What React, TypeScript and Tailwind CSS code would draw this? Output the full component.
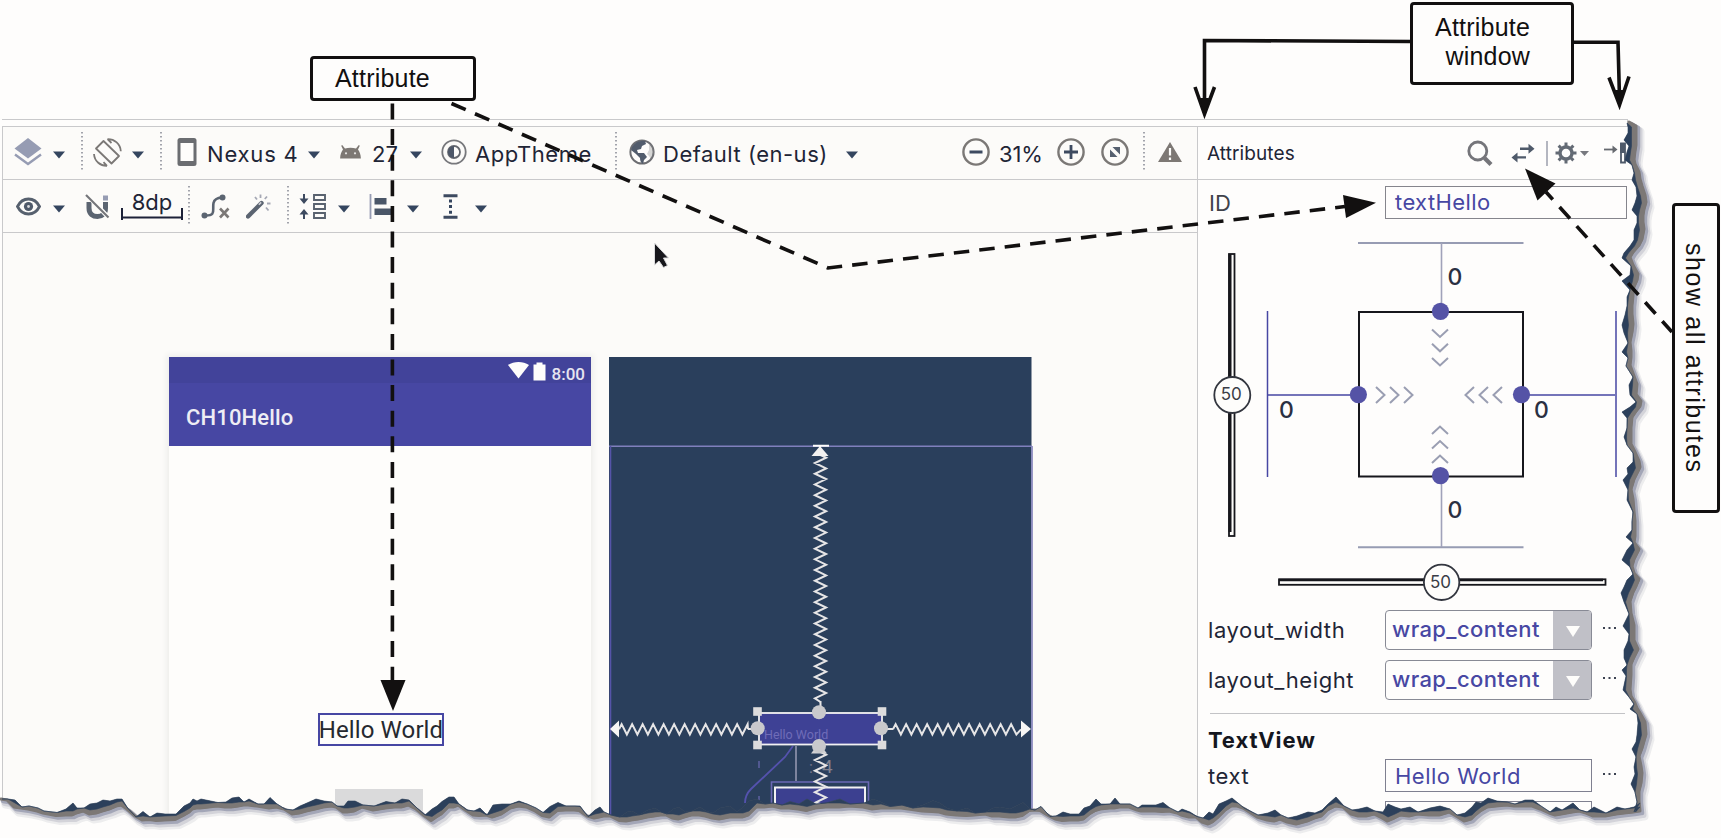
import React from "react";

type IconProps = { className?: string };

const SLATE = "#3d4a60";
const GRAY = "#7b7876";
const INDIGO = "#4747a3";

/* ---------- toolbar primitives ---------- */

function Caret({ className = "" }: IconProps) {
  return (
    <svg className={`mt-[5px] h-[8px] w-[12px] shrink-0 ${className}`} viewBox="0 0 12 8">
      <path d="M0 0.5H12L6 7.5Z" fill="#34455f" />
    </svg>
  );
}

function Divider({ className = "" }: IconProps) {
  return (
    <svg className={`h-[40px] w-[2px] shrink-0 ${className}`} viewBox="0 0 2 40">
      <path d="M1 0V40" stroke="#7d7f8c" strokeWidth="1.4" strokeDasharray="1.4 2.6" />
    </svg>
  );
}

function Label({ className = "", children }: { className?: string; children: React.ReactNode }) {
  return <span className={`block shrink-0 pt-[3px] whitespace-nowrap text-[#1f2536] ${className}`}>{children}</span>;
}

/* ---------- toolbar icons ---------- */

const LayersIcon = () => (
  <svg className="ml-[11px] h-[28px] w-[28px] shrink-0" viewBox="0 0 28 28">
    <path d="M14 0L27.5 10.5L14 20.5L0.5 10.5Z" fill="#969cb3" />
    <path d="M1 16.5L14 26L27 16.5" fill="none" stroke="#969cb3" strokeWidth="2.4" />
  </svg>
);

const RotateIcon = () => (
  <svg className="ml-[10px] h-[29px] w-[29px] shrink-0" viewBox="0 0 29 29" fill="none" stroke={GRAY} strokeWidth="1.8">
    <path d="M10.5 3L26 18L18.5 25.5L3 10.5Z" strokeLinejoin="round" />
    <path d="M14.5 1.2C21.5 1 27.5 6 27.8 13.3M14 27.8C7.5 28 1.5 23.5 1 16M14.5 1.2L18.5 5M14 27.8L10.5 24.2" />
  </svg>
);

const PhoneIcon = () => (
  <svg className="ml-[15px] h-[28px] w-[20px] shrink-0" viewBox="0 0 20 28">
    <rect x="0.5" y="0" width="19" height="28" rx="2.5" fill="#6b6d71" />
    <rect x="3.5" y="5" width="13" height="18" fill="#fefdfb" />
  </svg>
);

const AndroidIcon = () => (
  <svg className="ml-[20px] h-[14px] w-[21px] shrink-0" viewBox="0 0 21 14">
    <path d="M2.2 0L5 3.4C8.5 2.6 12.5 2.6 16 3.4L18.8 0L19.8 0.8L18 4.6C19.6 6.5 20.7 9.5 20.9 13.5H0.1C0.3 9.5 1.4 6.5 3 4.6L1.2 0.8Z" fill="#7d7874" />
    <circle cx="6" cy="8.3" r="1.1" fill="#e8e7e6" />
    <circle cx="15" cy="8.3" r="1.1" fill="#e8e7e6" />
  </svg>
);

const ThemeIcon = () => (
  <svg className="ml-[19px] h-[26px] w-[26px] shrink-0" viewBox="0 0 26 26">
    <circle cx="13" cy="13" r="11.7" fill="none" stroke="#77787c" strokeWidth="1.8" />
    <circle cx="13" cy="13" r="6" fill="none" stroke="#64676e" strokeWidth="1.8" />
    <path d="M13 7A6 6 0 0 0 13 19Z" fill="#4d5768" />
  </svg>
);

const GlobeIcon = () => (
  <svg className="ml-[12px] h-[26px] w-[26px] shrink-0" viewBox="0 0 26 26">
    <circle cx="13" cy="13" r="11.6" fill="#fefdfb" stroke="#6d6e72" strokeWidth="2" />
    <path d="M3 8C6 3 11 1 16 2L17 5L13 7L12 10L8 11L9 14H15L18 18L15 21L14 25C12 24 11 22 11 19L7 15L2 11Z" fill="#525c6c" />
    <path d="M20 6L22 5L24.5 10L25 14L22 20L20 17L18 15L20 11Z" fill="#8b8c8f" opacity="0.35" />
  </svg>
);

const ZoomOutIcon = () => (
  <svg className="ml-[104px] h-[28px] w-[28px] shrink-0" viewBox="0 0 28 28" fill="none">
    <circle cx="14" cy="14" r="12.6" stroke={GRAY} strokeWidth="2.4" />
    <path d="M7.5 14H20.5" stroke={SLATE} strokeWidth="3" />
  </svg>
);

const ZoomInIcon = () => (
  <svg className="h-[28px] w-[28px] shrink-0" viewBox="0 0 28 28" fill="none">
    <circle cx="14" cy="14" r="12.6" stroke={GRAY} strokeWidth="2.4" />
    <path d="M7 14H21M14 7V21" stroke={SLATE} strokeWidth="2.8" />
  </svg>
);

const ZoomFitIcon = () => (
  <svg className="ml-[16px] h-[28px] w-[28px] shrink-0" viewBox="0 0 28 28" fill="none">
    <circle cx="14" cy="14" r="12.6" stroke={GRAY} strokeWidth="2.4" />
    <path d="M11.5 9H19V16.5ZM9 11.5V19H16.5Z" fill="#56606f" />
  </svg>
);

const WarningIcon = () => (
  <svg className="ml-[12px] h-[20px] w-[26px] shrink-0" viewBox="0 0 26 20">
    <path d="M13 0L25 20H1Z" fill="#7d7874" />
    <path d="M13 6V13.5M13 15.5V18" stroke="#fefdfb" strokeWidth="2.2" />
  </svg>
);

const EyeIcon = () => (
  <svg className="ml-[13px] h-[19px] w-[25px] shrink-0" viewBox="0 0 25 19">
    <path d="M1.5 9.5C6.5 -0.5 18.5 -0.5 23.5 9.5C18.5 19.5 6.5 19.5 1.5 9.5Z" fill="none" stroke="#56606e" strokeWidth="2.8" />
    <circle cx="12.5" cy="9.5" r="4.6" fill="#4f5a6a" />
    <circle cx="12.5" cy="9.5" r="1.4" fill="#d9d9dc" />
  </svg>
);

const MagnetOffIcon = () => (
  <svg className="ml-[20px] h-[25px] w-[25px] shrink-0" viewBox="0 0 25 25">
    <path d="M4 8V14C4 20 8 22.5 12.5 22.5C17 22.5 20.5 20 20.5 14V8" fill="none" stroke="#5b6471" strokeWidth="5" />
    <rect x="18" y="1.5" width="5" height="5" fill="#969cb3" />
    <path d="M2 1L24 24" stroke="#fefdfb" strokeWidth="4.5" />
    <path d="M1 1L23.5 23.5" stroke="#74757a" strokeWidth="2.2" />
  </svg>
);

const ClearConstraintsIcon = () => (
  <svg className="ml-[11px] h-[25px] w-[29px] shrink-0" viewBox="0 0 29 25" fill="none">
    <path d="M3.5 21.5C16 22 11 16 12.5 9C13.3 5 16 3.8 21 3.5" stroke="#5b6471" strokeWidth="2.6" />
    <circle cx="3.5" cy="21.5" r="3" fill="#5b6471" />
    <circle cx="21.5" cy="3.5" r="3" fill="#5b6471" />
    <path d="M19 14.5L27.5 23.5M27.5 14.5L19 23.5" stroke="#7b7876" strokeWidth="2.6" />
  </svg>
);

const WandIcon = () => (
  <svg className="ml-[16px] h-[25px] w-[26px] shrink-0" viewBox="0 0 26 25" fill="none">
    <path d="M2 22.5L15.5 9" stroke="#5b6471" strokeWidth="4.4" strokeLinecap="round" />
    <path d="M12.8 10.8L15.2 8.4" stroke="#d0d0d6" strokeWidth="1.6" />
    <path d="M14.5 0.5V4M9 3L11 5.5M21 2.5L18.8 5M24.5 9.5H21M22.5 16.5L20 13.5" stroke="#a5a8b4" strokeWidth="1.8" />
  </svg>
);

const PackIcon = () => (
  <svg className="ml-[10px] h-[25px] w-[27px] shrink-0" viewBox="0 0 27 25" fill="none">
    <path d="M5 0V6M5 25V19" stroke={SLATE} strokeWidth="2" />
    <path d="M0.5 4.5H9.5L5 10Z M0.5 20.5H9.5L5 15Z" fill={SLATE} />
    <path d="M15 1H26V6H15ZM15 10H26V15H15ZM15 19H26V24H15Z" stroke="#59626f" strokeWidth="1.9" />
  </svg>
);

const AlignIcon = () => (
  <svg className="ml-[19px] h-[25px] w-[24px] shrink-0" viewBox="0 0 24 25">
    <path d="M1.5 0V25" stroke="#969cb3" strokeWidth="1.8" />
    <rect x="5.5" y="4" width="12" height="6.5" fill="#4a5668" />
    <rect x="5.5" y="14.5" width="18" height="6.5" fill="#4a5668" />
  </svg>
);

const GuidelineIcon = () => (
  <svg className="ml-[24px] h-[25px] w-[15px] shrink-0" viewBox="0 0 15 25">
    <path d="M0.5 1.8H14.5M0.5 23.2H14.5" stroke={SLATE} strokeWidth="3" />
    <path d="M7.5 5.5V21" stroke="#34455f" strokeWidth="3" strokeDasharray="3 2.6" />
  </svg>
);

function PrimaryToolbar() {
  return (
    <div className="flex h-[53px] items-center border-b border-[#c9c9cb] pb-[2px] text-[22px]">
      <LayersIcon />
      <Caret className="ml-[11px]" />
      <Divider className="ml-[16px]" />
      <RotateIcon />
      <Caret className="ml-[10px]" />
      <Divider className="ml-[16px]" />
      <PhoneIcon />
      <Label className="ml-[10px] w-[101px] tracking-[0.8px]">Nexus 4</Label>
      <Caret />
      <AndroidIcon />
      <Label className="ml-[11px] w-[38px]">27</Label>
      <Caret />
      <ThemeIcon />
      <Label className="ml-[8px] w-[140px] tracking-[0.55px]">AppTheme</Label>
      <Divider />
      <GlobeIcon />
      <Label className="ml-[8px] w-[183px] tracking-[0.5px]">Default (en-us)</Label>
      <Caret />
      <ZoomOutIcon />
      <Label className="ml-[9px] w-[58px] tracking-[-0.2px]">31%</Label>
      <ZoomInIcon />
      <ZoomFitIcon />
      <Divider className="ml-[14px]" />
      <WarningIcon />
    </div>
  );
}

function SecondaryToolbar() {
  return (
    <div className="flex h-[53px] items-center border-b border-[#c9c9cb] text-[22px]">
      <EyeIcon />
      <Caret className="ml-[12px]" />
      <MagnetOffIcon />
      <div className="relative ml-[11px] flex h-[30px] w-[62px] shrink-0 justify-center leading-[23px] text-[#1f2536]">
        8dp
        <svg className="absolute bottom-[1px] left-0 h-[12px] w-[62px]" viewBox="0 0 62 12">
          <path d="M1 0V12M61 0V12M1 9.5H61" stroke="#1c2138" strokeWidth="2" fill="none" />
        </svg>
      </div>
      <Divider className="ml-[5px]" />
      <ClearConstraintsIcon />
      <WandIcon />
      <Divider className="ml-[15px]" />
      <PackIcon />
      <Caret className="ml-[12px]" />
      <AlignIcon />
      <Caret className="ml-[14px]" />
      <GuidelineIcon />
      <Caret className="ml-[17px]" />
    </div>
  );
}

/* ---------- design surface ---------- */

function PhonePreview() {
  return (
    <div className="flex w-[422px] flex-col bg-[#fefdfb] shadow-[0_0_6px_2px_#ececea]">
      <div className="flex h-[26px] justify-end bg-[#42439a] pr-[6px] text-[#e6e5f0]">
        <svg className="mt-[5px] h-[17px] w-[21px]" viewBox="0 0 21 17">
          <path d="M0 3C6 -1 15 -1 21 3L10.5 16.5Z" fill="#fefdfb" />
        </svg>
        <svg className="mt-[5px] ml-[4px] h-[19px] w-[13px]" viewBox="0 0 13 19">
          <path d="M0.5 2.5H3.5V0.5H9.5V2.5H12.5V18.5H0.5Z" fill="#fefdfb" />
        </svg>
        <span className="mt-[7px] ml-[6px] font-['Roboto',sans-serif] text-[17px] leading-[20px] font-medium">8:00</span>
      </div>
      <div className="flex h-[63px] items-center bg-[#4747a3] pt-[7px] pl-[17px] font-['Roboto',sans-serif] text-[22px] font-medium tracking-[0.15px] text-[#eeedf4]">
        CH10Hello
      </div>
      <div className="mt-[267px] ml-[149px] flex h-[33px] w-[126px] items-center justify-center border-2 border-[#4747a3] font-['Roboto',sans-serif] text-[24px] tracking-[0.1px] whitespace-nowrap text-[#26292f]">
        Hello World
      </div>
      <div className="mt-[43px] ml-[166px] h-[49px] w-[88px] bg-[#dadadb]" />
    </div>
  );
}

function zigzagX(x0: number, x1: number, cy: number, amp: number, step: number): string {
  let d = `M${x0} ${cy}`;
  let up = true;
  for (let x = x0 + step / 2; x < x1; x += step) {
    d += `L${x} ${up ? cy - amp : cy + amp}`;
    up = !up;
  }
  return `${d}L${x1} ${cy}`;
}

function zigzagY(y0: number, y1: number, cx: number, amp: number, step: number): string {
  let d = `M${cx} ${y0}`;
  let right = true;
  for (let y = y0 + step / 2; y < y1; y += step) {
    d += `L${right ? cx + amp : cx - amp} ${y}`;
    right = !right;
  }
  return `${d}L${cx} ${y1}`;
}

function Blueprint() {
  const handles = [
    [757.5, 711.5],
    [882, 711.5],
    [757.5, 745],
    [882, 745],
  ];
  const anchors = [
    [757.7, 728.3],
    [881, 728.3],
    [819, 712.3],
    [819, 746],
  ];
  return (
    <svg className="h-[481px] w-[424px] shrink-0" viewBox="609 357 424 481" fill="none">
      <rect x="609" y="357" width="422.5" height="481" fill="#2a3f5c" />
      <path d="M609 446.3H1032" stroke="#8080bd" strokeWidth="1.6" />
      <path d="M610.5 446V838" stroke="#5654a8" strokeWidth="1.6" />
      <path d="M1032 446V838" stroke="#8d8cc0" strokeWidth="1.8" />

      <g stroke="#e6e5e6" strokeWidth="2">
        <path d={zigzagY(455, 702, 820.5, 5.6, 5.35)} />
        <path d={zigzagX(619, 748, 729.3, 5.2, 5.25)} />
        <path d={zigzagX(893, 1021, 729.3, 5.2, 5.25)} />
        <path d="M748 729H758M883 729H893M820.5 701V712" />
      </g>
      <path d="M813 445.8H829M820 446V448" stroke="#fefdfb" strokeWidth="2" />
      <path d="M820 446L828.5 456H811.5Z" fill="#f2f1f0" />
      <path d="M610 729L619 720.5V737.5Z M1031 729L1021 720.5V737.5Z" fill="#f7f6f5" />

      <path d="M796 746V781" stroke="#9a9cb4" strokeWidth="1.5" />
      <path d="M793 746L785 757L751 789Q745 795 745 803" stroke="#5452ad" strokeWidth="1.8" />
      <path d="M759 761V768M759 796V800" stroke="#6c69b4" strokeWidth="1.2" />
      <path d="M771.5 838V782H868.5V838" stroke="#6a68b4" strokeWidth="1.6" />
      <rect x="775" y="788" width="90" height="50" fill="#3c4090" />
      <path d="M775 838V787.5H865V838" stroke="#f2f1f2" strokeWidth="2" />
      <text x="809" y="773" fontFamily="Roboto, sans-serif" fontSize="16" fill="#77778e">:</text>
      <text x="822" y="773" fontFamily="Roboto, sans-serif" fontSize="19" fill="#82828f">4</text>

      <rect x="759" y="713" width="123" height="31.5" fill="#3e4195" stroke="#f2f1f2" strokeWidth="1.8" />
      <text x="764" y="739" fontFamily="Roboto, sans-serif" fontSize="12.5" fill="#6f6cb8">Hello World</text>
      <path d={zigzagY(752, 804, 820.5, 5.6, 5.35)} stroke="#e6e5e6" strokeWidth="2" />
      <path d="M819 743L827 753.5H811Z" fill="#d2d2d4" />
      {handles.map(([x, y]) => (
        <rect key={`${x}-${y}`} x={x - 4.3} y={y - 4.3} width="8.6" height="8.6" fill="#dddcdd" />
      ))}
      {anchors.map(([x, y]) => (
        <circle key={`${x}-${y}`} cx={x} cy={y} r="7" fill="#c9c9cc" />
      ))}
    </svg>
  );
}

/* ---------- attributes panel ---------- */

function ConstraintWidget() {
  const digit = { fontFamily: "Inter, sans-serif", fontSize: 23, fontWeight: 500, fill: "#2a3042" };
  const num = { fontFamily: "Inter, sans-serif", fontSize: 17, fill: "#3a3c46", textAnchor: "middle" as const };
  return (
    <svg className="h-[391px] w-[440px] shrink-0" viewBox="1198 219 440 391" fill="none">
      <path d="M1358 243H1523.5M1358 547.3H1523.5" stroke="#979cb3" strokeWidth="2" />
      <path d="M1441.5 243V305M1441.5 482V547" stroke="#a0a2ba" strokeWidth="1.6" />
      <path d="M1267.5 311V477M1616 311V477M1268 395H1352M1528 395H1615" stroke={INDIGO} strokeWidth="1.5" />
      <rect x="1359" y="312" width="164" height="164.5" stroke="#17171c" strokeWidth="2" />
      <g fill="#5553a6">
        <circle cx="1440.5" cy="311.3" r="8.6" />
        <circle cx="1440.5" cy="475.6" r="8.6" />
        <circle cx="1358.4" cy="394.6" r="8.6" />
        <circle cx="1521.5" cy="394.6" r="8.6" />
      </g>
      <g stroke="#9a9eb2" strokeWidth="2">
        <path d="M1432 329.5L1440 337L1448 329.5M1432 343.8L1440 351.3L1448 343.8M1432 358L1440 365.5L1448 358" />
        <path d="M1432 434L1440 426.5L1448 434M1432 448.5L1440 441L1448 448.5M1432 463L1440 455.5L1448 463" />
        <path d="M1376 387L1384.5 395L1376 403M1390 387L1398.5 395L1390 403M1404 387L1412.5 395L1404 403" />
        <path d="M1474 387L1465.5 395L1474 403M1488 387L1479.5 395L1488 403M1502 387L1493.5 395L1502 403" />
      </g>
      <text x="1447.5" y="284.5" {...digit}>0</text>
      <text x="1447.5" y="518" {...digit}>0</text>
      <text x="1279" y="417.5" {...digit}>0</text>
      <text x="1534" y="417.5" {...digit}>0</text>

      <rect x="1229" y="254" width="5.5" height="282" fill="#fefdfb" stroke="#17171c" strokeWidth="1.8" />
      <path d="M1230 254V532" stroke="#17171c" strokeWidth="3" />
      <circle cx="1232.3" cy="395" r="18" fill="#fefdfb" stroke="#33363f" strokeWidth="1.8" />
      <text x="1231.3" y="399.5" {...num}>50</text>

      <rect x="1279" y="579.3" width="326.5" height="5.5" fill="#fefdfb" stroke="#17171c" strokeWidth="1.8" />
      <path d="M1279 580H1603" stroke="#17171c" strokeWidth="2.6" />
      <circle cx="1441.6" cy="582.3" r="17.7" fill="#fefdfb" stroke="#33363f" strokeWidth="1.8" />
      <text x="1440.5" y="587.5" {...num}>50</text>
    </svg>
  );
}

function MoreDots() {
  return (
    <svg className="mb-[4px] ml-[11px] h-[2px] w-[13px] shrink-0" viewBox="0 0 13 2">
      <path d="M0 0H2V2H0ZM5.5 0H7.5V2H5.5ZM11 0H13V2H11Z" fill="#3b4150" />
    </svg>
  );
}

function SelectRow({ label, value, className = "" }: { label: string; value: string; className?: string }) {
  return (
    <div className={`flex h-[40px] items-center ${className}`}>
      <span className="w-[177px] shrink-0 pb-[1px] tracking-[0.6px] text-[#1f2536]">{label}</span>
      <div className="flex h-[40px] w-[207px] shrink-0 overflow-hidden rounded-[4px] border border-[#888a95]">
        <span className="flex flex-1 items-center pb-[2px] pl-[6px] font-medium tracking-[0.4px] text-[#4747a3]">{value}</span>
        <span className="-my-px -mr-px flex w-[39px] items-center justify-center bg-[#c0c0c7] pt-[2px]">
          <svg className="h-[11px] w-[14px]" viewBox="0 0 14 11">
            <path d="M0 0H14L7 11Z" fill="#fefdfb" />
          </svg>
        </span>
      </div>
      <MoreDots />
    </div>
  );
}

function PanelHeader() {
  return (
    <div className="flex h-[53px] shrink-0 items-center border-b border-[#c9c9cb] pl-[9px]">
      <span className="w-[260px] text-[19px] tracking-[0.1px] text-[#1f2536]">Attributes</span>
      <svg className="h-[26px] w-[26px] shrink-0" viewBox="0 0 26 26" fill="none">
        <circle cx="10.8" cy="11" r="9" stroke="#75757a" strokeWidth="2.8" />
        <path d="M17.5 18L24 24.5" stroke="#75757a" strokeWidth="4.2" />
      </svg>
      <svg className="ml-[18px] h-[20px] w-[24px] shrink-0" viewBox="0 0 24 20">
        <path d="M9 4.6H17.5V0.8L23.5 5.8L17.5 10.8V7H9Z M15 13.2H6.5V9.4L0.5 14.4L6.5 19.4V15.6H15Z" fill="#4f5a6a" />
      </svg>
      <span className="ml-[11px] h-[25px] w-[1.5px] shrink-0 bg-[#b4b6c0]" />
      <svg className="ml-[7px] h-[22px] w-[22px] shrink-0" viewBox="0 0 22 22" fill="none">
        <circle cx="11" cy="11" r="6" stroke="#636a74" strokeWidth="3.4" />
        <path d="M11 0.5V4M11 18V21.5M0.5 11H4M18 11H21.5M3.6 3.6L6 6M16 16L18.4 18.4M3.6 18.4L6 16M16 6L18.4 3.6" stroke="#636a74" strokeWidth="3" />
      </svg>
      <svg className="ml-[3px] h-[5px] w-[9px] shrink-0" viewBox="0 0 9 5">
        <path d="M0 0H9L4.5 5Z" fill="#77797f" />
      </svg>
      <svg className="ml-[15px] h-[22px] w-[26px] shrink-0" viewBox="0 0 26 22" fill="none">
        <path d="M0 7.5H11" stroke="#66696f" strokeWidth="1.8" />
        <path d="M8.5 3.5L13.5 7.5L8.5 11.5Z" fill="#66696f" />
        <path d="M17 1.5H21V20.5H17Z" stroke="#4f5a6a" strokeWidth="1.8" />
        <path d="M16 1H21V11H16Z" fill="#4f5a6a" />
      </svg>
    </div>
  );
}

function AttributesPanel() {
  return (
    <aside className="flex w-[436px] shrink-0 flex-col border-l border-[#c9c9cb] bg-[#fefdfc] text-[22px]">
      <PanelHeader />
      <div className="mt-[6px] flex h-[33px] shrink-0 items-center pl-[11px] text-[#1f2536]">
        <span className="w-[176px] shrink-0 text-[#3f414a]">ID</span>
        <div className="flex h-[33px] w-[242px] shrink-0 items-center border border-[#85858c] pb-px pl-[9px] tracking-[0.4px] text-[#4747a3]">
          textHello
        </div>
      </div>
      <ConstraintWidget />
      <div className="flex flex-col pl-[10px]">
        <SelectRow label="layout_width" value="wrap_content" />
        <SelectRow label="layout_height" value="wrap_content" className="mt-[10px]" />
        <div className="mt-[13px] ml-[2px] h-px w-[415px] bg-[#c3c3c6]" />
        <div className="flex h-[45px] items-center pt-[7px] font-bold tracking-[0.9px] text-[#15171f]">TextView</div>
        <div className="flex h-[33px] items-center">
          <span className="w-[177px] shrink-0 tracking-[0.6px] text-[#1f2536]">text</span>
          <div className="flex h-[33px] w-[207px] shrink-0 items-center border border-[#7f8090] pl-[9px] tracking-[0.5px] text-[#4747a3]">
            Hello World
          </div>
          <MoreDots />
        </div>
        <div className="mt-[9px] ml-[177px] h-[33px] w-[207px] border border-[#7f8090]" />
      </div>
    </aside>
  );
}

/* ---------- torn paper edge: [position, inner, outer] ---------- */

const BOTTOM: number[][] = [
  [2, 799, 800], [8, 799, 801], [15, 800, 808], [22, 807, 809], [29, 806, 810], [38, 808, 812], [44, 811, 814], [57, 812.5, 816.5],
  [66, 809, 816], [73, 803, 816], [77, 808, 814], [84, 808, 812], [90, 804, 815], [97, 803, 814], [103, 800, 812], [110, 801, 810], [117, 799, 807],
  [122, 799, 806], [128, 808.5, 810], [136, 817, 817], [143, 811.5, 821], [150, 817, 820.5], [157, 813, 821.5], [165, 814, 821], [176, 814, 820.5],
  [184, 806, 816.5], [190, 803, 813], [193, 799, 810], [197, 801, 809], [201, 799, 809], [218, 802.5, 807], [226, 802, 808], [232, 798, 808],
  [239, 797, 807], [244, 802, 806], [249, 799, 806], [258, 804, 807], [264, 804, 808], [270, 797.5, 809], [277, 804, 808], [285, 809, 810],
  [293, 810, 815], [300, 806, 814], [307, 803, 812], [316, 799, 810], [324, 801, 808], [332, 802, 807], [337, 806, 808], [344, 806, 813],
  [348, 801, 813], [355, 801, 812], [363, 805, 808], [374, 806, 811], [386, 801.5, 809], [395, 803, 808], [402, 799, 808], [409, 800, 806],
  [417, 808, 810], [425, 815, 816.5], [432, 809, 821.5], [437, 806, 818], [442, 801.5, 815], [449, 797, 808], [454, 797, 808], [459, 804, 806],
  [467, 810, 811.5], [474, 811, 816], [480, 808, 816.5], [487, 815, 816], [493, 805, 818], [502, 804, 815], [511, 804, 809], [519, 801, 807],
  [527, 804, 808], [536, 808, 812], [543, 812.5, 816.5], [550, 806.5, 818], [558, 802.5, 811.5], [566, 806, 811], [575, 806, 811], [580, 806, 811.5],
  [588, 816.5, 817], [595, 810, 819], [600, 807, 818], [604, 812, 817], [611, 815, 817], [620, 817, 821.5], [627, 812, 822], [632, 811, 821],
  [639, 815, 820], [648, 810, 818], [655, 808, 817], [661, 812, 816], [667, 814, 816], [673, 809, 819], [679, 807, 820], [685, 812, 818],
  [692, 811, 816], [700, 807, 816], [706, 811, 817], [713, 813, 819], [720, 808, 820], [730, 806, 818], [737, 812, 818], [743, 807, 818],
  [749, 801, 816], [757, 799, 808], [765, 804, 808], [773, 803, 807], [782, 805, 809], [790, 801.5, 809], [799, 804, 810], [807, 799, 811.5],
  [816, 804, 809], [826, 803, 808], [840, 799, 808], [850, 804, 807], [864, 803, 808], [873, 799, 810], [881, 802, 809], [890, 806.5, 809],
  [902, 805, 809], [913, 808, 810.5], [923, 805, 812], [933, 800.5, 812.5], [940, 803, 813], [947, 808, 815], [957, 811, 816], [967, 808, 816.5],
  [975, 813, 816], [986, 812, 815], [993, 808, 817], [1000, 807, 817], [1010, 809, 818], [1016, 806, 818], [1023, 802.5, 816.5], [1030, 809, 811.5],
  [1035, 810, 811], [1041, 806.5, 811.5], [1050, 816.5, 817], [1056, 816, 820], [1063, 812, 821.5], [1070, 814, 821], [1079, 814, 821],
  [1084, 808, 820], [1090, 806, 815], [1096, 799, 811.5], [1101, 804, 810], [1110, 804, 809], [1115, 798, 809], [1120, 804, 808], [1130, 804, 808],
  [1138, 808, 811], [1142, 805, 812], [1156, 805, 812], [1163, 802.5, 812.5], [1170, 808, 812], [1178, 812, 814], [1182, 809, 816], [1190, 812, 818],
  [1197, 816.5, 818], [1203, 818, 823], [1209, 812, 825], [1213, 814, 823], [1219, 804, 818], [1226, 801, 811], [1232, 798, 807], [1238, 803, 807],
  [1244, 808, 809], [1258, 815, 818], [1268, 813, 821], [1275, 810, 822], [1281, 815, 820], [1288, 818, 823], [1297, 816, 825], [1308, 812, 822],
  [1315, 813, 819], [1322, 810, 817], [1328, 804, 811], [1336, 797, 807], [1344, 806, 808], [1352, 810, 815], [1359, 809, 817], [1367, 807, 817],
  [1375, 811, 815], [1383, 812, 819], [1388, 804, 822], [1395, 807, 819], [1401, 809, 816], [1410, 807, 817], [1418, 812, 815], [1430, 808, 816],
  [1440, 806, 816], [1450, 809, 813], [1457, 815, 817], [1465, 813, 822], [1472, 807, 820], [1476, 802, 816], [1481, 803, 812], [1488, 798, 808],
  [1497, 801, 807], [1507, 802, 806], [1515, 804, 807], [1525, 800, 807], [1533, 800, 807], [1541, 806, 810], [1550, 812, 814], [1556, 807, 816],
  [1562, 810, 815], [1573, 803, 813], [1580, 810, 812], [1587, 812, 814], [1594, 807, 817], [1606, 813, 817], [1617, 807, 815], [1625, 809, 814],
  [1634, 807, 813], [1640, 803, 812],
];

const RIGHT: number[][] = [
  [123, 1627, 1630], [127, 1628, 1637], [133, 1628, 1637], [140, 1624, 1637], [146, 1629, 1637], [152, 1627, 1636], [160, 1625, 1635],
  [165, 1632, 1636], [173, 1634, 1640], [180, 1632, 1641], [187, 1636, 1643], [196, 1637, 1646], [203, 1635, 1647], [210, 1632, 1645], [216, 1637, 1644],
  [223, 1637, 1644], [230, 1634, 1645], [240, 1634, 1643], [246, 1630, 1640], [253, 1624, 1634], [258, 1622, 1631], [266, 1631, 1634], [275, 1630, 1639],
  [281, 1622, 1638], [290, 1630, 1634], [297, 1627, 1634], [306, 1627, 1633], [315, 1625, 1633], [325, 1622, 1634], [333, 1624, 1633], [343, 1628, 1631],
  [352, 1622, 1632], [358, 1628, 1632], [366, 1626, 1631], [377, 1633, 1635], [385, 1629, 1638], [395, 1630, 1637], [402, 1636, 1642], [407, 1630, 1641],
  [412, 1622, 1637], [418, 1627, 1633], [428, 1627, 1632], [437, 1624, 1632], [445, 1627, 1632], [453, 1633, 1636], [462, 1633, 1640], [468, 1627, 1641],
  [474, 1628, 1638], [480, 1623, 1635], [490, 1628, 1632], [500, 1627, 1634], [512, 1633, 1635], [522, 1632, 1636], [530, 1632, 1636], [537, 1626, 1636],
  [543, 1633, 1635], [550, 1627, 1640], [560, 1622, 1635], [567, 1630, 1633], [574, 1633, 1635], [580, 1627, 1640], [587, 1624, 1637], [593, 1621, 1634],
  [602, 1624, 1631], [614, 1629, 1632], [626, 1623, 1635], [634, 1629, 1635], [641, 1628, 1635], [650, 1624, 1639], [658, 1624, 1635], [665, 1627, 1632],
  [670, 1622, 1632], [676, 1626, 1632], [690, 1623, 1631], [697, 1629, 1632], [704, 1634, 1636], [709, 1630, 1638], [714, 1637, 1641], [723, 1638, 1646],
  [735, 1637, 1647], [742, 1636, 1645], [749, 1632, 1643], [757, 1636, 1640], [767, 1634, 1642], [774, 1635, 1643], [784, 1631, 1642], [792, 1635, 1640],
  [802, 1637, 1640], [812, 1634, 1641],
];

const toPoints = (pts: number[][]) => pts.map((p) => p.join(",")).join(" ");

function TornEdge() {
  const outer = [
    ...RIGHT.map(([y, , x]) => [x, y]),
    ...[...BOTTOM].reverse().map(([x, , y]) => [x, y]),
  ];
  const inner = [
    ...RIGHT.map(([y, x]) => [x, y]),
    ...[...BOTTOM].reverse().map(([x, y]) => [x, y]),
  ];
  const core = [
    ...RIGHT.map(([y, a, b]) => [Math.max(a, b - 5.5), y]),
    ...[...BOTTOM].reverse().map(([x, a, b]) => [x, Math.max(a, b - 5)]),
  ];
  const outside = [[1627, 110], [1721, 110], [1721, 838], [0, 838], [0, 799]];
  const ring = toPoints([...outer, ...[...inner].reverse()]);
  const rim = toPoints([...inner, ...[...core].reverse()]);
  return (
    <svg className="pointer-events-none absolute inset-0 h-[838px] w-[1721px]" viewBox="0 0 1721 838" fill="none">
      <polygon points={toPoints([...outer, ...[...outside].reverse()])} fill="#fefdfc" />
      <g strokeLinejoin="round" strokeLinecap="round">
        <polyline points={toPoints(outer)} transform="translate(3.5 4.5)" stroke="#ededee" strokeWidth="8" />
        <polyline points={toPoints(outer)} transform="translate(2.5 3)" stroke="#d3d3d9" strokeWidth="6" />
        <polyline points={toPoints(outer)} transform="translate(1 1)" stroke="#a3a6b7" strokeWidth="4.5" />
        <polyline points={toPoints(outer)} transform="translate(-1 -1)" stroke="#7c7876" strokeWidth="3" />
      </g>
      <polygon points={ring} fill="#7c7876" />
      <polygon points={rim} fill="#2c405b" stroke="#2c405b" strokeWidth="0.6" />
    </svg>
  );
}

/* ---------- annotations ---------- */

function Callouts() {
  return (
    <svg className="pointer-events-none absolute inset-0 h-[838px] w-[1721px]" viewBox="0 0 1721 838" fill="none">
      <g stroke="#121010" strokeWidth="3.6">
        <path d="M392.4 103.5V682" strokeDasharray="16 9.6" />
        <path d="M451.5 103.5L828 268L1345 206.5" strokeDasharray="15.5 10.1" />
        <path d="M1672 332L1546 192" strokeDasharray="15.5 10.1" strokeDashoffset="1" />
        <path d="M1411 41.5L1204.5 40.5V106" />
        <path d="M1572 42.3H1618L1619.5 98" />
        <path d="M1195 87L1204.5 114L1214.5 87M1609 77.5L1619.5 105L1629 76.5" />
      </g>
      <g fill="#121010">
        <path d="M380.5 680H405.5L393 711Z" />
        <path d="M1376 202.7L1343 195L1346 218Z" />
        <path d="M1525 168.5L1555.5 183.5L1537.5 200.5Z" />
        <path d="M1200 98L1204.5 117.5L1209 98Z M1615 90L1619.7 107.5L1624 90Z" />
      </g>
      <path d="M654.5 243V265L659 261L663.5 267.5L667.5 265.5L663.5 258H668.5Z" fill="#17171c" stroke="#dcdcde" strokeWidth="1" />
    </svg>
  );
}

export default function App() {
  return (
    <div className="relative h-[838px] w-[1721px] overflow-hidden bg-[#fefdfc] pt-[119px] font-['Inter',sans-serif] leading-none">
      <div className="ml-[2px] h-[7px] w-[1626px] border-t border-r border-[#c9c9cb]" />
      <div className="ml-[2px] flex h-[712px] w-[1632px] border-t border-[#c9c9cb]">
        <main className="flex w-[1195px] shrink-0 flex-col border-l border-[#c9c9cb] bg-[#fcfbf9]">
          <PrimaryToolbar />
          <SecondaryToolbar />
          <div className="flex flex-1 gap-[18px] pt-[124px] pl-[166px]">
            <PhonePreview />
            <Blueprint />
          </div>
        </main>
        <AttributesPanel />
      </div>

      <TornEdge />
      <Callouts />

      <div className="absolute top-[56px] left-[310px] h-[45px] w-[166px] rounded-[4px] border-[3.5px] border-[#121010] pt-[5px] pl-[22px] font-['Liberation_Sans',sans-serif] text-[25px] leading-[29px] tracking-[0.2px] text-[#121010]">
        Attribute
      </div>
      <div className="absolute top-[2px] left-[1410px] h-[83px] w-[164px] rounded-[4px] border-[3.5px] border-[#121010] bg-[#fefdfc] pt-[8px] pr-[41px] text-right font-['Liberation_Sans',sans-serif] text-[25px] leading-[29px] tracking-[0.2px] text-[#121010]">
        Attribute
        <br />
        window
      </div>
      <div className="absolute top-[203px] left-[1672px] flex h-[310px] w-[48px] items-center rounded-[4px] border-[3.5px] border-[#121010] bg-[#fefdfc] pt-[37px] font-['Liberation_Sans',sans-serif] text-[25px] leading-[38px] tracking-[1.6px] text-[#121010] [writing-mode:vertical-rl]">
        <span className="h-full pr-[3px] whitespace-nowrap">show all attributes</span>
      </div>
    </div>
  );
}
